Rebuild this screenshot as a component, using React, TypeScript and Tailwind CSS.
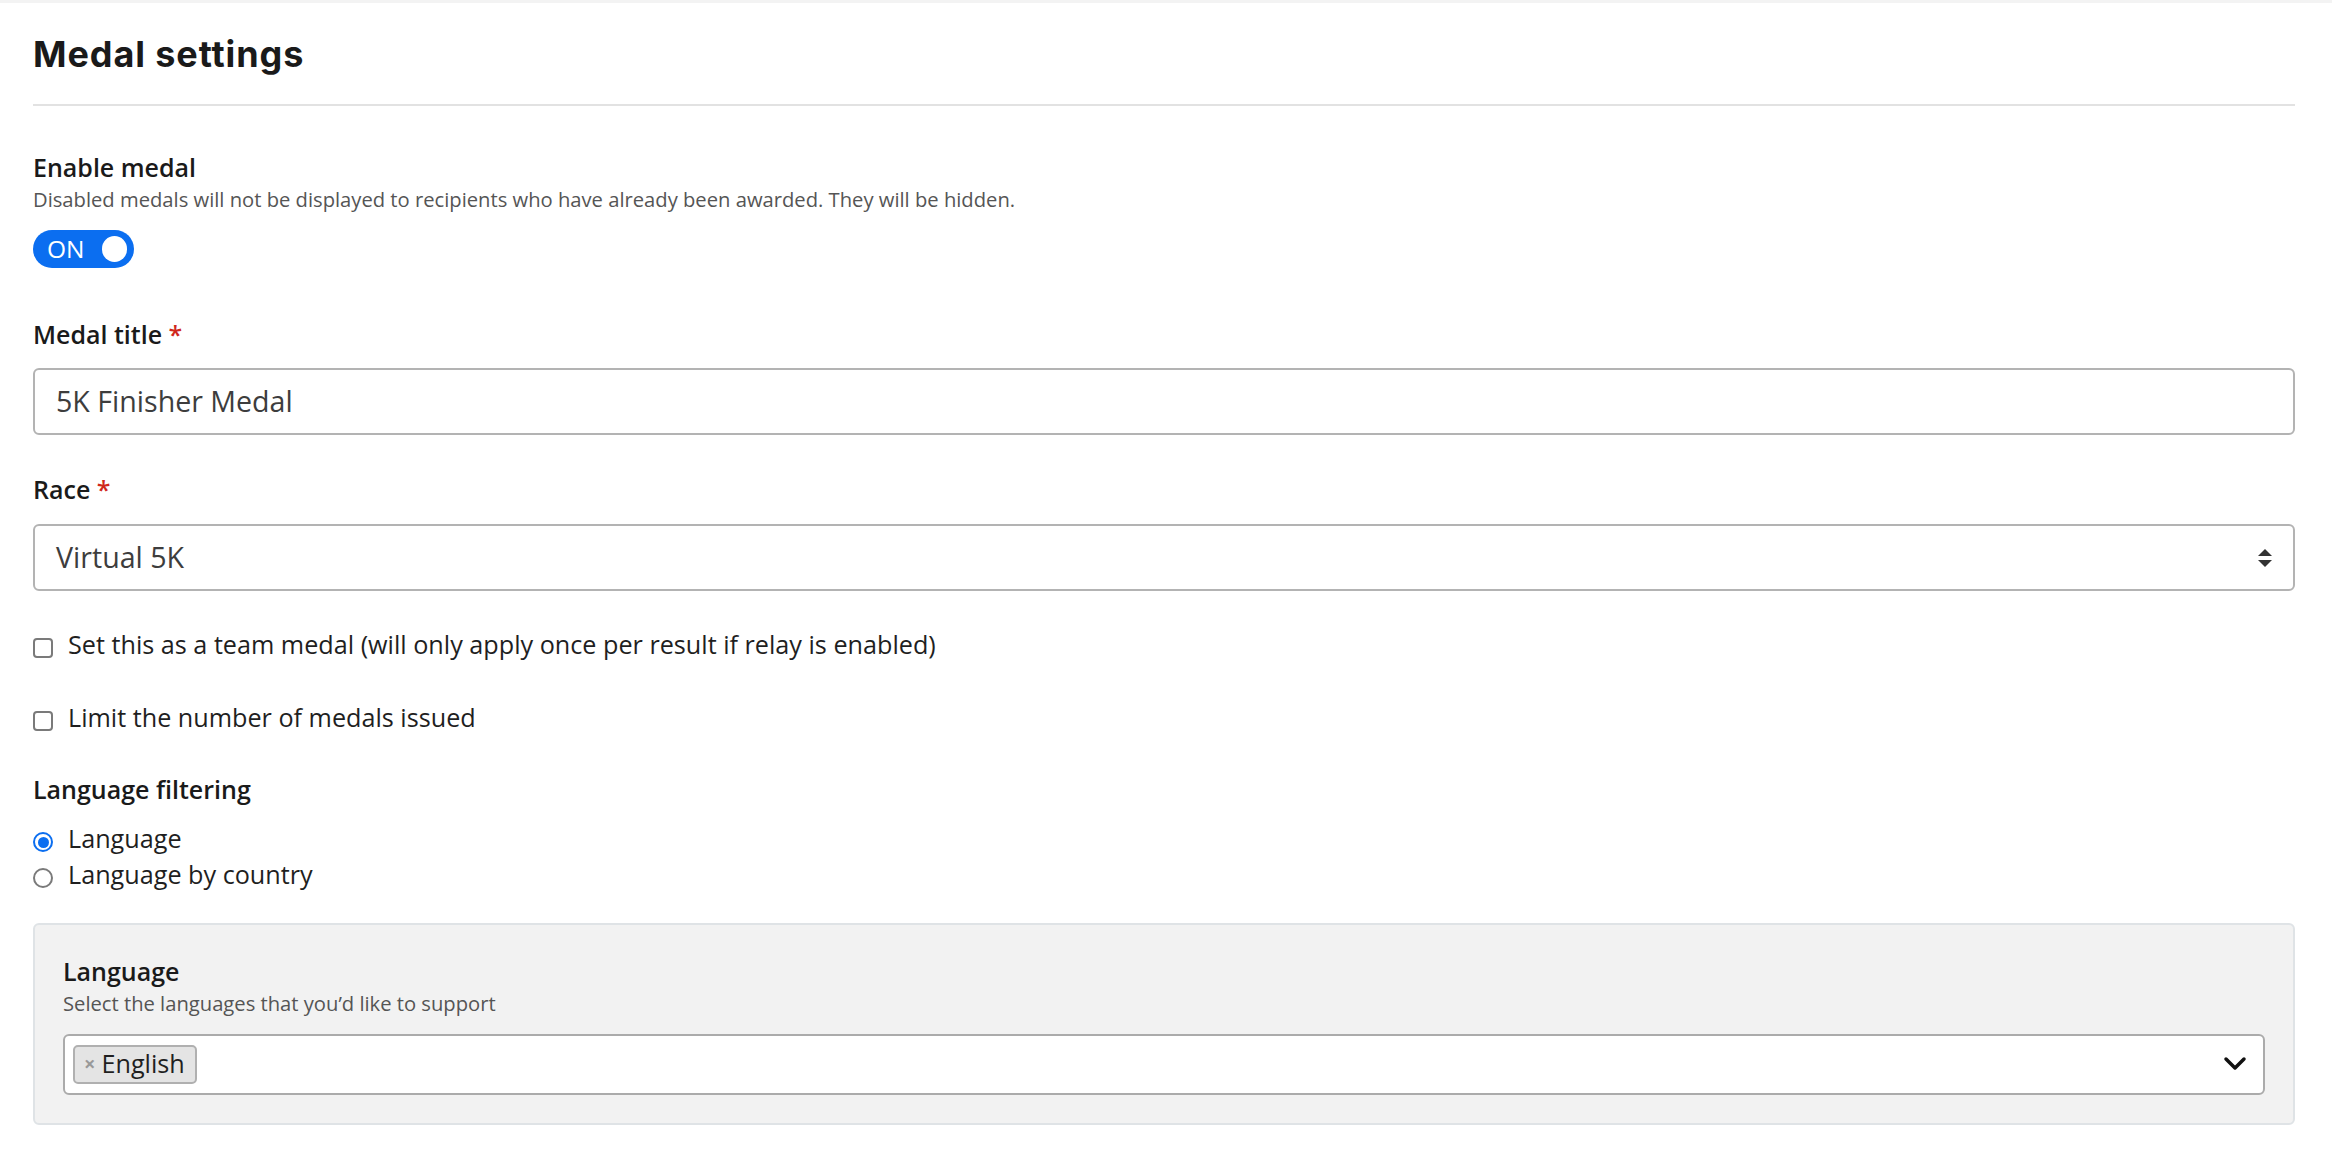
import React from "react";

const body = { fontFamily: '"Open Sans", "Noto Sans", "Liberation Sans", sans-serif' };

function Label({ children, required }: { children: React.ReactNode; required?: boolean }) {
  return (
    <div className="text-[25px] leading-[36px] font-semibold text-[#1a1a1a]">
      {children}
      {required && <span className="text-[#d0281c] font-semibold"> *</span>}
    </div>
  );
}

function Checkbox({ label, className }: { label: string; className?: string }) {
  return (
    <div className={"flex items-start " + (className ?? "")}>
      <span className="mt-[12px] w-[20px] h-[20px] shrink-0 rounded-[4px] border-[2px] border-[#7a7a7a] bg-white" />
      <span className="ml-[15px] text-[25.2px] leading-[36px] text-[#1f1f1f]">{label}</span>
    </div>
  );
}

function Radio({ label, checked }: { label: string; checked?: boolean }) {
  return (
    <div className="flex items-start">
      {checked ? (
        <span className="mt-[12px] w-[20px] h-[20px] shrink-0 rounded-full border-[2px] border-[#0b6ef0] bg-white flex items-center justify-center">
          <span className="w-[11px] h-[11px] rounded-full bg-[#0b6ef0]" />
        </span>
      ) : (
        <span className="mt-[12px] w-[20px] h-[20px] shrink-0 rounded-full border-[2px] border-[#7a7a7a] bg-white" />
      )}
      <span className="ml-[15px] text-[25.2px] leading-[36px] text-[#1f1f1f]">{label}</span>
    </div>
  );
}

export default function App() {
  return (
    <div className="min-h-screen bg-white" style={body}>
      <div className="h-[3px] bg-[#f3f3f3]" />
      <div className="pl-[33px] pr-[37px] pb-[40px]">
        <h1
          className="mt-[30px] text-[36px] leading-[42px] font-bold text-[#1a1a1a] tracking-[0.025em]"
          style={{ fontFamily: 'Inter, "Liberation Sans", sans-serif' }}
        >
          Medal settings
        </h1>
        <div className="mt-[29px] h-[2px] bg-[#e2e2e2]" />

        <div className="mt-[43px]">
          <Label>Enable medal</Label>
          <div className="text-[20.2px] leading-[29.25px] text-[#555555]">
            Disabled medals will not be displayed to recipients who have already been awarded. They will be hidden.
          </div>
          <div className="mt-[16px] w-[101px] h-[38px] rounded-full bg-[#0b6ef0] flex items-center justify-between pl-[14px] pr-[7px]">
            <span className="text-white text-[24.5px] leading-none">ON</span>
            <span className="w-[25px] h-[26px] rounded-full bg-white" />
          </div>
        </div>

        <div className="mt-[48px]">
          <Label required>Medal title</Label>
          <div className="mt-[16px] h-[67px] rounded-[6px] border-[2px] border-[#b3b3b3] bg-white flex items-center pl-[21px]">
            <span className="text-[28.6px] text-[#3d3d3d]">5K Finisher Medal</span>
          </div>
        </div>

        <div className="mt-[36px]">
          <Label required>Race</Label>
          <div className="mt-[17px] h-[67px] rounded-[6px] border-[2px] border-[#b3b3b3] bg-white flex items-center justify-between pl-[21px] pr-[21px]">
            <span className="text-[28.6px] text-[#3d3d3d]">Virtual 5K</span>
            <svg width="14" height="18" viewBox="0 0 14 18">
              <polygon points="0,7 7,0 14,7" fill="#333" />
              <polygon points="0,11 14,11 7,18" fill="#333" />
            </svg>
          </div>
        </div>

        <Checkbox className="mt-[35px]" label="Set this as a team medal (will only apply once per result if relay is enabled)" />
        <Checkbox className="mt-[37px]" label="Limit the number of medals issued" />

        <div className="mt-[36px]">
          <Label>Language filtering</Label>
          <div className="mt-[13px]">
            <Radio label="Language" checked />
            <Radio label="Language by country" />
          </div>
        </div>

        <div className="mt-[31px] rounded-[6px] border-[2px] border-[#dfe3e6] bg-[#f2f2f2] p-[28px]">
          <Label>Language</Label>
          <div className="text-[20.2px] leading-[29.25px] text-[#555555]">
            Select the languages that you’d like to support
          </div>
          <div className="mt-[15px] h-[61px] rounded-[6px] border-[2px] border-[#ababab] bg-white flex items-center justify-between pl-[8px] pr-[16px]">
            <span className="h-[39px] flex items-center rounded-[5px] border-[2px] border-[#b0b0b0] bg-[#e4e4e4] pl-[9px] pr-[10px]">
              <span className="text-[20px] font-bold text-[#999999] leading-none mr-[6px]">×</span>
              <span className="text-[25.2px] text-[#1f1f1f] leading-none">English</span>
            </span>
            <svg width="24" height="16" viewBox="0 0 24 16">
              <polyline points="3,3 12,12 21,3" fill="none" stroke="#111" strokeWidth="3.5" strokeLinecap="round" strokeLinejoin="round" />
            </svg>
          </div>
        </div>
      </div>
    </div>
  );
}
